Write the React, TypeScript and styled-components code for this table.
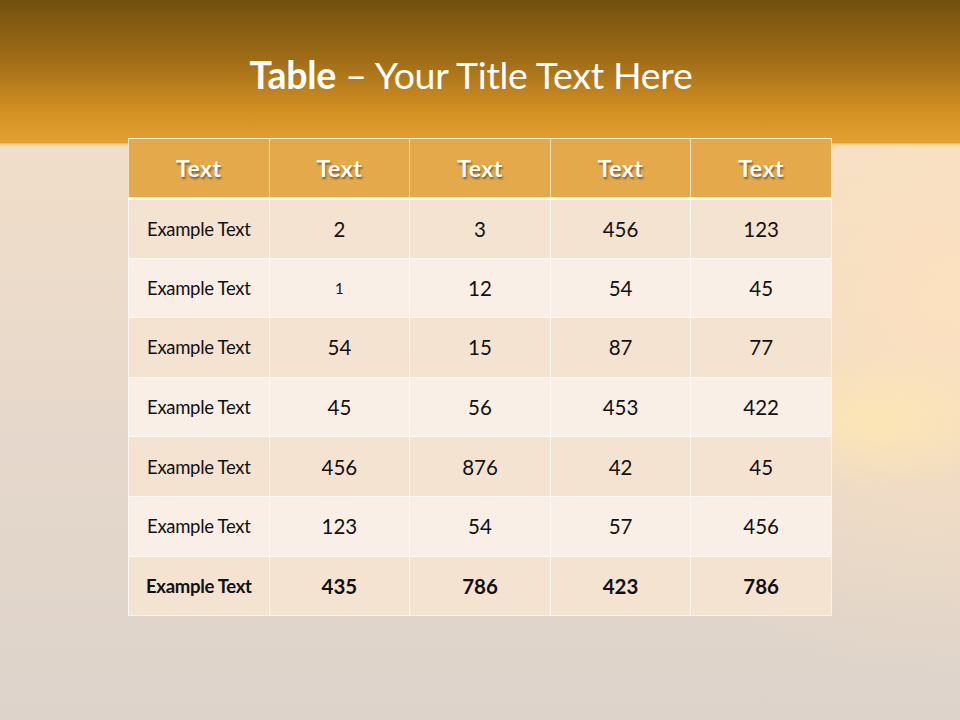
import React from "react";
import styled, { createGlobalStyle } from "styled-components";

const Global = createGlobalStyle`
  html, body { margin: 0; padding: 0; }
  body { width: 960px; height: 720px; overflow: hidden; font-family: Lato, "Open Sans", sans-serif; }
`;

const Slide = styled.div`
  position: relative;
  width: 960px;
  height: 720px;
  overflow: hidden;
  display: flex;
  flex-direction: column;
  align-items: center;
  background:
    linear-gradient(180deg, #74500f 0px, #a06d17 60px, #d28f22 110px, #e2a232 143px, #f3d09a 144px, #f3d09a 145px, transparent 146px),
    radial-gradient(ellipse 140px 70px at 880px 420px, rgba(255, 232, 175, 0.75), rgba(255, 232, 175, 0) 100%),
    radial-gradient(ellipse 420px 380px at 960px 300px, rgba(253, 225, 190, 0.95), rgba(253, 225, 190, 0) 100%),
    linear-gradient(180deg, #f1dec9 145px, #e6d8cb 420px, #ddd3ca 720px);
`;

const Title = styled.h1`
  margin: 0;
  padding: 54px 18px 0 0;
  height: 138px;
  box-sizing: border-box;
  font-family: Lato, "Open Sans", sans-serif;
  font-size: 37.5px;
  font-weight: 400;
  line-height: 42px;
  color: #ffffff;
  letter-spacing: -0.3px;
  b { font-weight: 700; }
`;

const Table = styled.table`
  border-collapse: collapse;
  table-layout: fixed;
  width: 704px;
  border: 1px solid #fbf3ea;
`;

const HeadCell = styled.th`
  height: 58px;
  padding: 0;
  background: #e3a94b;
  border-left: 1px solid #f6e2c0;
  border-bottom: 3px solid #ffffff;
  color: #ffffff;
  font-family: Lato, "Open Sans", sans-serif;
  font-size: 23px;
  font-weight: 700;
  letter-spacing: 0.5px;
  text-align: center;
  vertical-align: middle;
  text-shadow: 1px 1.5px 2px rgba(60, 30, 0, 0.55);
`;

const Row = styled.tr<{ $alt: boolean }>`
  height: 59.6px;
  background: ${(p) => (p.$alt ? "#f9efe6" : "#f5e3d2")};
`;

const Cell = styled.td<{ $label?: boolean; $bold?: boolean; $small?: boolean }>`
  padding: 0;
  border-left: 1px solid #fdf8f3;
  border-top: 1px solid #fdf8f3;
  text-align: center;
  vertical-align: middle;
  color: #111111;
  font-family: Lato, "Open Sans", sans-serif;
  font-size: ${(p) => (p.$label ? "18.5px" : p.$small ? "15px" : "20.5px")};
  font-weight: ${(p) => (p.$bold ? 700 : 400)};
  letter-spacing: ${(p) => (p.$label ? "-0.3px" : "0")};
`;

const rows: string[][] = [
  ["2", "3", "456", "123"],
  ["1", "12", "54", "45"],
  ["54", "15", "87", "77"],
  ["45", "56", "453", "422"],
  ["456", "876", "42", "45"],
  ["123", "54", "57", "456"],
  ["435", "786", "423", "786"],
];

export default function App() {
  return (
    <Slide>
      <Global />
      <Title>
        <b>Table</b> – Your Title Text Here
      </Title>
      <Table>
        <thead>
          <tr>
            {["Text", "Text", "Text", "Text", "Text"].map((t, i) => (
              <HeadCell key={i}>{t}</HeadCell>
            ))}
          </tr>
        </thead>
        <tbody>
          {rows.map((r, i) => {
            const bold = i === rows.length - 1;
            return (
              <Row key={i} $alt={i % 2 === 1}>
                <Cell $label $bold={bold}>Example Text</Cell>
                {r.map((v, j) => (
                  <Cell key={j} $bold={bold} $small={i === 1 && j === 0}>
                    {v}
                  </Cell>
                ))}
              </Row>
            );
          })}
        </tbody>
      </Table>
    </Slide>
  );
}
